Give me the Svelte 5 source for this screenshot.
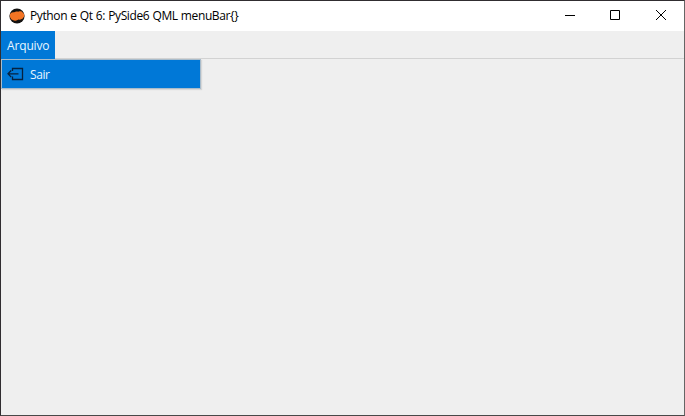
<script>
  const title = 'Python e Qt 6: PySide6 QML menuBar{}';
</script>

<main class="window">
  <header class="titlebar">
    <svg class="logo" width="16" height="16" viewBox="0 0 16 16">
      <circle cx="8" cy="8" r="7.6" fill="#141211" />
      <path d="M.9 8.2C.5 5.5 2.5 4 5.2 4.3 7 3 9 4 9.8 3.6 11.3 2.8 13 3.6 13.6 4.4 15.6 5.4 15.8 8.3 14.4 9.6 13.8 11.4 11 11.9 9.6 11.6 7.6 13.1 5 12.8 3.8 11.9 2 11.4 1.2 10 .9 8.2Z" fill="#f47424" />
    </svg>
    <span class="title">{title}</span>
    <div class="controls">
      <button aria-label="Minimizar"><svg width="10" height="10"><path d="M0 5.5H10" /></svg></button>
      <button aria-label="Maximizar"><svg width="10" height="10"><path d="M.5 .5H9.5V9.5H.5Z" /></svg></button>
      <button aria-label="Fechar"><svg width="10" height="10"><path d="M0 0L10 10M10 0L0 10" /></svg></button>
    </div>
  </header>
  <nav class="menubar"><span class="arquivo">Arquivo</span></nav>
  <div class="menu">
    <svg width="17" height="14" viewBox="0 0 17 14" fill="none" stroke="#06213f" stroke-width="1.3">
      <path d="M5.5 4V1.5H15.5V12.5H5.5V9.5M1 6.8H11.5M4.2 3.5L1 6.8L4.2 10.1" />
    </svg>
    <span class="sair">Sair</span>
  </div>
</main>

<style>
  :global(body) { margin: 0; }
  .window {
    box-sizing: border-box;
    width: 685px;
    height: 416px;
    background: #efefef;
    border: 1px solid #302d30;
    border-right-color: #656565;
    border-bottom-color: #484848;
    font: 12px 'Open Sans', 'Noto Sans', sans-serif;
    overflow: hidden;
  }
  .titlebar {
    display: flex;
    align-items: center;
    height: 30px;
    background: #fff;
    padding-left: 8px;
  }
  .logo { flex: none; margin-right: 5px; margin-top: -1px; }
  .title { color: #000; white-space: pre; letter-spacing: -0.38px; word-spacing: 0.4px; padding-bottom: 1px; }
  .controls { display: flex; margin-left: auto; height: 30px; }
  button {
    width: 45.5px;
    height: 30px;
    padding: 0 0 2px;
    border: 0;
    background: none;
    display: flex;
    align-items: center;
    justify-content: center;
  }
  button:nth-child(2) { padding-right: 1px; }
  button path { fill: none; stroke: #000; stroke-width: 1; }
  .menubar {
    box-sizing: border-box;
    display: flex;
    height: 28px;
    border-bottom: 1px solid #d2d2d2;
  }
  .arquivo {
    box-sizing: border-box;
    width: 54px;
    height: 28px;
    padding-left: 6px;
    line-height: 30px;
    letter-spacing: -0.15px;
    background: #0078d7;
    color: #e8f6ff;
  }
  .menu {
    box-sizing: border-box;
    display: flex;
    align-items: center;
    width: 200px;
    height: 30px;
    padding-left: 5px;
    background: #0078d7;
    border: 1px solid #a9bccb;
    box-shadow: 1px 1px 1px #d8d8d8;
    color: #e8f6ff;
  }
  .sair { margin-left: 6px; padding-top: 1px; letter-spacing: -0.4px; }
</style>
